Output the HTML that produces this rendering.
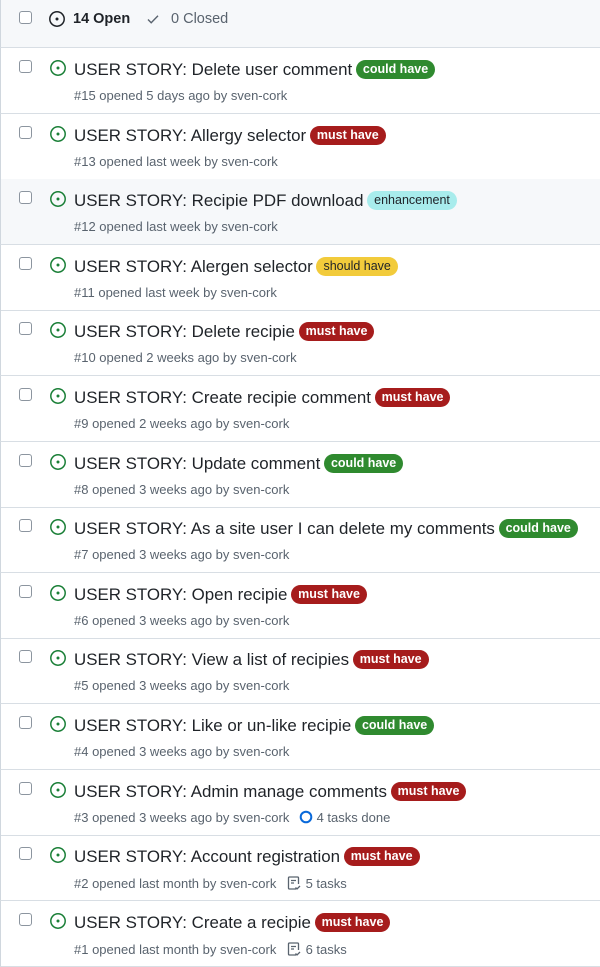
<!DOCTYPE html>
<html><head><meta charset="utf-8"><style>
*{box-sizing:border-box;margin:0;padding:0}
body{width:600px;height:961px;overflow:hidden;background:#fff;font-family:"Liberation Sans",Arial,sans-serif;position:relative}
.hdr{position:absolute;left:0;top:0;width:600px;height:48px;background:#f6f8fa;border-bottom:1px solid #d8dee4;border-left:1px solid #d0d7de}
.cb{position:absolute;left:18px;width:13px;height:13px;border:1px solid #8c959f;border-radius:3px;background:#fff}
.row{position:absolute;left:0;width:600px;height:66px;border-bottom:1px solid #d8dee4;border-left:1px solid #d0d7de}
.row .cb{top:12px}
.row svg.ic{position:absolute;left:48px;top:11px}
.t{position:absolute;left:73px;top:12px;font-size:16.9px;color:#1f2328;white-space:nowrap}
.m{position:absolute;left:73px;top:40px;font-size:13px;color:#59636e;white-space:nowrap}
.l{display:inline-block;font-size:12.5px;font-weight:bold;line-height:18px;height:19px;padding:0 7px;border-radius:10px;vertical-align:2px;margin-left:-1px}
.cg{background:#2f8a2f;color:#fff}
.mh{background:#a61c1c;color:#fff}
.en{background:#a8ecec;color:#1f2328;font-weight:normal}
.sh{background:#f2cb3b;color:#1f2328;font-weight:normal}
</style></head><body>
<div class="hdr">
<div class="cb" style="top:11px"></div>
<svg style="position:absolute;left:47px;top:10px" width="18" height="18" viewBox="0 0 18 18"><circle cx="9" cy="9" r="7.2" fill="none" stroke="#1f2328" stroke-width="1.5"/><circle cx="9" cy="9" r="1.5" fill="#1f2328"/></svg>
<div style="position:absolute;left:72px;top:11px;font-size:14.5px;font-weight:bold;color:#1f2328">14 Open</div>
<svg style="position:absolute;left:145px;top:12px" width="14" height="14" viewBox="0 0 14 14"><path d="M2 7.5l3.2 3.2L12 3.8" fill="none" stroke="#59636e" stroke-width="1.4"/></svg>
<div style="position:absolute;left:170px;top:11px;font-size:14.5px;color:#59636e">0 Closed</div>
</div>
<div id="rows"></div>
<script>
var d=[
["Delete user comment","cg","could have","#15 opened 5 days ago by sven-cork",""],
["Allergy selector","mh","must have","#13 opened last week by sven-cork",""],
["Recipie PDF download","en","enhancement","#12 opened last week by sven-cork",""],
["Alergen selector","sh","should have","#11 opened last week by sven-cork",""],
["Delete recipie","mh","must have","#10 opened 2 weeks ago by sven-cork",""],
["Create recipie comment","mh","must have","#9 opened 2 weeks ago by sven-cork",""],
["Update comment","cg","could have","#8 opened 3 weeks ago by sven-cork",""],
["As a site user I can delete my comments","cg","could have","#7 opened 3 weeks ago by sven-cork",""],
["Open recipie","mh","must have","#6 opened 3 weeks ago by sven-cork",""],
["View a list of recipies","mh","must have","#5 opened 3 weeks ago by sven-cork",""],
["Like or un-like recipie","cg","could have","#4 opened 3 weeks ago by sven-cork",""],
["Admin manage comments","mh","must have","#3 opened 3 weeks ago by sven-cork","c4 tasks done"],
["Account registration","mh","must have","#2 opened last month by sven-cork","t5 tasks"],
["Create a recipie","mh","must have","#1 opened last month by sven-cork","t6 tasks"]];
var h="";
d.forEach(function(r,i){
var top=Math.round(48+i*65.6);
var ex="";
if(r[4][0]=="c")ex=' <svg width="14" height="14" viewBox="0 0 14 14" style="vertical-align:-2px;margin-left:6px"><circle cx="7" cy="7" r="5.3" fill="none" stroke="#0969da" stroke-width="2"/></svg> '+r[4].slice(1);
if(r[4][0]=="t")ex=' <svg width="16" height="16" viewBox="0 0 16 16" style="vertical-align:-3px;margin-left:6px"><path d="M10 14H3.5a1 1 0 0 1-1-1V3a1 1 0 0 1 1-1h8a1 1 0 0 1 1 1v6M5 5.5h5M5 8h3M9.5 12.5l1.5 1.5 3-3" fill="none" stroke="#59636e" stroke-width="1.3"/></svg> '+r[4].slice(1);
h+='<div class="row" style="top:'+top+'px;'+(i==2?'background:#f6f8fa':'')+'"><div class="cb"></div><svg class="ic" width="18" height="18" viewBox="0 0 18 18"><circle cx="9" cy="9" r="7.2" fill="none" stroke="#1a7f37" stroke-width="1.5"/><circle cx="9" cy="9" r="1.5" fill="#1a7f37"/></svg><div class="t">USER STORY: '+r[0]+' <span class="l '+r[1]+'">'+r[2]+'</span></div><div class="m">'+r[3]+ex+'</div></div>';
});
document.getElementById("rows").innerHTML=h;
</script>
</body></html>
